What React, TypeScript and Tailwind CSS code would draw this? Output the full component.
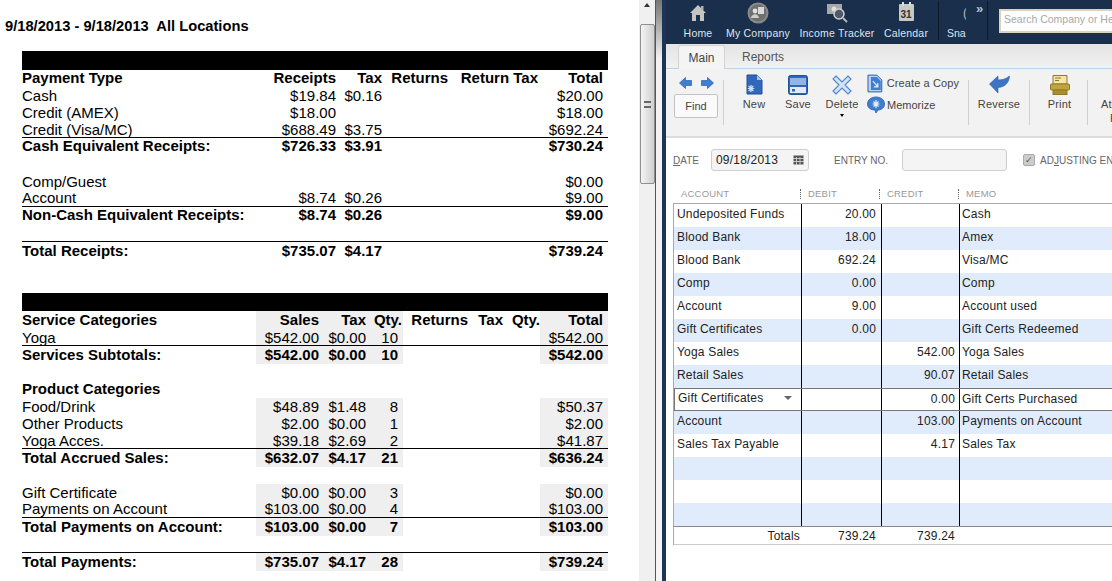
import React from "react"

type ReportRow = {
  h: string
  cells?: string[]
  bold?: boolean
  line?: boolean
  topLine?: boolean
  gray?: boolean
  head?: boolean
  lift?: boolean
}

const cols1 = [218, 96, 46, 66, 90, 70]
const cols2 = [234, 63, 47, 37, 65, 35, 37, 68]

function Row({ row, cols }: { row: ReportRow; cols: number[] }) {
  const grayIdx = row.gray ? [1, 2, 3, 7] : []
  const isSales = cols.length === 8
  return (
    <div
      className={`flex ${row.h} ${row.line ? "border-b border-black" : ""} ${row.topLine ? "border-t border-black" : ""} ${row.bold ? "font-bold" : ""}`}
    >
      {cols.map((w, i) => (
        <div
          key={i}
          style={{ width: w }}
          className={`flex items-center leading-none whitespace-nowrap ${row.bold || row.lift ? "pb-[2px]" : ""} ${i === 0 ? "" : "justify-end"} ${i === cols.length - 1 ? "pr-[5px]" : ""} ${grayIdx.includes(i) ? "bg-[#efefef]" : ""} ${isSales && i === 3 ? (row.head ? "pr-px" : "pr-[5px]") : ""}`}
        >
          {row.cells?.[i] ?? ""}
        </div>
      ))}
    </div>
  )
}

const receipts: ReportRow[] = [
  { h: "h-[17px]", bold: true, cells: ["Payment Type", "Receipts", "Tax", "Returns", "Return Tax", "Total"] },
  { h: "h-[17px]", cells: ["Cash", "$19.84", "$0.16", "", "", "$20.00"] },
  { h: "h-[17px]", cells: ["Credit (AMEX)", "$18.00", "", "", "", "$18.00"] },
  { h: "h-[17px]", line: true, cells: ["Credit (Visa/MC)", "$688.49", "$3.75", "", "", "$692.24"] },
  { h: "h-[17px]", bold: true, cells: ["Cash Equivalent Receipts:", "$726.33", "$3.91", "", "", "$730.24"] },
  { h: "h-[18px]" },
  { h: "h-[17px]", cells: ["Comp/Guest", "", "", "", "", "$0.00"] },
  { h: "h-[17px]", line: true, lift: true, cells: ["Account", "$8.74", "$0.26", "", "", "$9.00"] },
  { h: "h-[17px]", bold: true, cells: ["Non-Cash Equivalent Receipts:", "$8.74", "$0.26", "", "", "$9.00"] },
  { h: "h-[17px]" },
  { h: "h-[19px]", bold: true, topLine: true, cells: ["Total Receipts:", "$735.07", "$4.17", "", "", "$739.24"] },
]

const sales: ReportRow[] = [
  { h: "h-[18px]", bold: true, gray: true, head: true, cells: ["Service Categories", "Sales", "Tax", "Qty.", "Returns", "Tax", "Qty.", "Total"] },
  { h: "h-[17px]", gray: true, line: true, cells: ["Yoga", "$542.00", "$0.00", "10", "", "", "", "$542.00"] },
  { h: "h-[18px]", gray: true, bold: true, cells: ["Services Subtotals:", "$542.00", "$0.00", "10", "", "", "", "$542.00"] },
  { h: "h-[17px]" },
  { h: "h-[17px]", bold: true, cells: ["Product Categories"] },
  { h: "h-[17px]", gray: true, cells: ["Food/Drink", "$48.89", "$1.48", "8", "", "", "", "$50.37"] },
  { h: "h-[17px]", gray: true, cells: ["Other Products", "$2.00", "$0.00", "1", "", "", "", "$2.00"] },
  { h: "h-[17px]", gray: true, line: true, cells: ["Yoga Acces.", "$39.18", "$2.69", "2", "", "", "", "$41.87"] },
  { h: "h-[18px]", gray: true, bold: true, cells: ["Total Accrued Sales:", "$632.07", "$4.17", "21", "", "", "", "$636.24"] },
  { h: "h-[17px]" },
  { h: "h-[17px]", gray: true, cells: ["Gift Certificate", "$0.00", "$0.00", "3", "", "", "", "$0.00"] },
  { h: "h-[17px]", gray: true, line: true, lift: true, cells: ["Payments on Account", "$103.00", "$0.00", "4", "", "", "", "$103.00"] },
  { h: "h-[18px]", gray: true, bold: true, cells: ["Total Payments on Account:", "$103.00", "$0.00", "7", "", "", "", "$103.00"] },
  { h: "h-[16px]" },
  { h: "h-[19px]", gray: true, bold: true, topLine: true, cells: ["Total Payments:", "$735.07", "$4.17", "28", "", "", "", "$739.24"] },
]

function HomeIcon() {
  return (
    <svg width="18" height="18" viewBox="0 0 18 18">
      <path d="M9 1 L17 9 L15 9 L15 17 L11 17 L11 11 L7 11 L7 17 L3 17 L3 9 L1 9 Z" fill="#c4c4c0" />
      <rect x="12" y="2" width="2.5" height="4" fill="#b0b0ac" />
    </svg>
  )
}

function CompanyIcon() {
  return (
    <svg width="22" height="22" viewBox="0 0 22 22">
      <circle cx="11" cy="11" r="10.5" fill="#8a8a8a" />
      <circle cx="11" cy="11" r="8.5" fill="#6f6f6f" />
      <rect x="11" y="5" width="6" height="7" fill="#d8d8d8" />
      <circle cx="8" cy="9" r="2.4" fill="#e0e0e0" />
      <path d="M4 16 C5 11 11 11 12 16 Z" fill="#cfcfcf" />
    </svg>
  )
}

function TrackerIcon() {
  return (
    <svg width="22" height="22" viewBox="0 0 22 22">
      <rect x="1" y="2" width="15" height="10" fill="#a8a8a8" />
      <circle cx="8" cy="7" r="2.5" fill="#e0e0e0" />
      <circle cx="13" cy="12" r="5" fill="#4e5a68" stroke="#d0d0d0" strokeWidth="1.5" />
      <path d="M17 16 L21 20" stroke="#b8b8b8" strokeWidth="2" />
    </svg>
  )
}

function CalendarIcon() {
  return (
    <div className="relative h-[17px] w-[15px] rounded-[1px] bg-[#c9c9c4]">
      <div className="absolute left-[3px] top-[-2px] h-[4px] w-[2px] bg-[#ddd]" />
      <div className="absolute right-[3px] top-[-2px] h-[4px] w-[2px] bg-[#ddd]" />
      <div className="absolute inset-x-0 bottom-[1px] text-center text-[10px] font-bold leading-none text-[#333]">31</div>
    </div>
  )
}

function NavItem({ w, label, children }: { w: string; label: string; children: React.ReactNode }) {
  return (
    <div className={`flex ${w} shrink-0 flex-col items-center`}>
      <div className="flex h-[25px] items-center">{children}</div>
      <div className="mt-[1px] whitespace-nowrap text-[10.5px] leading-[14px] tracking-[0.2px] text-[#dfe5ec]">{label}</div>
    </div>
  )
}

function Arrow({ flip }: { flip?: boolean }) {
  return (
    <svg width="13" height="12" viewBox="0 0 13 12" className={flip ? "-scale-x-100" : ""}>
      <path d="M0.5 6 L6.5 0.5 L6.5 3.5 L12.5 3.5 L12.5 8.5 L6.5 8.5 L6.5 11.5 Z" fill="#3f7ed0" stroke="#2a5da8" strokeWidth="0.7" />
    </svg>
  )
}

function NewIcon() {
  return (
    <svg width="17" height="21" viewBox="0 0 17 21">
      <path d="M1 1 L11 1 L16 6 L16 20 L1 20 Z" fill="#3168bd" stroke="#24508f" />
      <path d="M11 1 L11 6 L16 6 Z" fill="#a8c6ee" />
      <path d="M5 11 L5 18 M1.8 14.5 L8.2 14.5 M2.6 12 L7.4 17 M7.4 12 L2.6 17" stroke="#cfe0f6" strokeWidth="1.2" />
    </svg>
  )
}

function SaveIcon() {
  return (
    <svg width="20" height="20" viewBox="0 0 20 20">
      <rect x="0.5" y="0.5" width="19" height="19" rx="2" fill="#2f66b8" stroke="#24508f" />
      <rect x="2" y="3" width="16" height="7" fill="#93b5e3" />
      <rect x="2" y="12" width="16" height="6" fill="#dfe9f7" />
      <rect x="4" y="14" width="3" height="2.5" fill="#2f66b8" />
    </svg>
  )
}

function DeleteIcon() {
  return (
    <svg width="20" height="20" viewBox="0 0 20 20">
      <path d="M4 1 L10 7 L16 1 L19 4 L13 10 L19 16 L16 19 L10 13 L4 19 L1 16 L7 10 L1 4 Z" fill="#d4e3f7" stroke="#4a85d0" strokeWidth="1.1" />
    </svg>
  )
}

function CopyIcon() {
  return (
    <svg width="16" height="19" viewBox="0 0 16 19">
      <path d="M1 1 L10 1 L15 6 L15 18 L1 18 Z" fill="#bcd3f0" stroke="#2a5da8" />
      <path d="M4 3 L10 3 L14 7 L14 16 L4 16 Z" fill="#3f7ed0" />
      <path d="M6 7 L11 13 M11 9 L11 13 L7 13" stroke="#e6effa" strokeWidth="1.2" fill="none" />
    </svg>
  )
}

function MemorizeIcon() {
  return (
    <svg width="18" height="18" viewBox="0 0 18 18">
      <path d="M9 1 C14 1 17.5 4 17.5 8 C17.5 12 14 14 11 14 L9 17 L8 14 C4 14 0.5 12 0.5 8 C0.5 4 4 1 9 1 Z" fill="#3f7ed0" stroke="#2a5da8" strokeWidth="0.8" />
      <path d="M9 4 L9 12 M5.5 8 L12.5 8 M6.5 5.5 L11.5 10.5 M11.5 5.5 L6.5 10.5" stroke="#e6effa" strokeWidth="1.2" />
    </svg>
  )
}

function ReverseIcon() {
  return (
    <svg width="21" height="19" viewBox="0 0 21 19">
      <path d="M0.5 9 L9 1 L9 5 C13 5 17 4 20.5 1 C20 8 16 12 9 12.5 L9 18 Z" fill="#3d74c4" stroke="#2a5da8" strokeWidth="0.6" />
    </svg>
  )
}

function PrintIcon() {
  return (
    <svg width="20" height="20" viewBox="0 0 20 20">
      <path d="M3 0.5 L17 0.5 L17 9 L3 9 Z" fill="#f3e4a8" stroke="#8f7a2c" />
      <path d="M5 3 L11 3 M5 5.5 L9 5.5" stroke="#8f7a2c" />
      <rect x="0.5" y="9" width="19" height="6" rx="1" fill="#c2a43c" stroke="#8f7a2c" />
      <rect x="3" y="15" width="14" height="4.5" fill="#a98d2e" stroke="#8f7a2c" />
    </svg>
  )
}

function ToolBtn({ w, label, children, caret }: { w: string; label: string; children: React.ReactNode; caret?: boolean }) {
  return (
    <div className={`flex ${w} shrink-0 flex-col items-center`}>
      <div className="flex h-[23px] items-center">{children}</div>
      <div className="mt-[1px] text-[11px] leading-[14px] tracking-[0.2px] text-[#444]">{label}</div>
      {caret && <div className="mt-[3px] h-0 w-0 border-x-[2.5px] border-t-[3px] border-x-transparent border-t-black" />}
    </div>
  )
}

function Sep() {
  return <div className="h-[45px] w-px shrink-0 bg-[#cfcfcf]" />
}

type Line = { account: string; debit: string; credit: string; memo: string }

const lines: Line[] = [
  { account: "Undeposited Funds", debit: "20.00", credit: "", memo: "Cash" },
  { account: "Blood Bank", debit: "18.00", credit: "", memo: "Amex" },
  { account: "Blood Bank", debit: "692.24", credit: "", memo: "Visa/MC" },
  { account: "Comp", debit: "0.00", credit: "", memo: "Comp" },
  { account: "Account", debit: "9.00", credit: "", memo: "Account used" },
  { account: "Gift Certificates", debit: "0.00", credit: "", memo: "Gift Certs Redeemed" },
  { account: "Yoga Sales", debit: "", credit: "542.00", memo: "Yoga Sales" },
  { account: "Retail Sales", debit: "", credit: "90.07", memo: "Retail Sales" },
  { account: "Gift Certificates", debit: "", credit: "0.00", memo: "Gift Certs Purchased" },
  { account: "Account", debit: "", credit: "103.00", memo: "Payments on Account" },
  { account: "Sales Tax Payable", debit: "", credit: "4.17", memo: "Sales Tax" },
  { account: "", debit: "", credit: "", memo: "" },
  { account: "", debit: "", credit: "", memo: "" },
  { account: "", debit: "", credit: "", memo: "" },
]

function HeaderCell({ w, label, dots }: { w: string; label: string; dots?: boolean }) {
  return (
    <div className={`flex ${w} shrink-0 items-center`}>
      {dots && <div className="ml-[-1px] mr-[7px] h-[10px] w-px border-l border-dotted border-[#666]" />}
      <span className={dots ? "" : "pl-[8px]"}>{label}</span>
    </div>
  )
}

export default function App() {
  return (
    <div className="flex h-[581px] w-[1112px] overflow-hidden bg-white text-black">
      {/* Report */}
      <div className="w-[639px] shrink-0 overflow-hidden pl-[22px] font-['Liberation_Sans',sans-serif] text-[15px]">
        <div className="ml-[-17px] h-[51px] pt-[18px] text-[14.7px] font-bold leading-4 whitespace-pre">9/18/2013 - 9/18/2013  All Locations</div>
        <div className="w-[586px]">
          <div className="h-[19px] bg-black" />
          {receipts.map((r, i) => (
            <Row key={i} row={r} cols={cols1} />
          ))}
          <div className="h-[33px]" />
          <div className="h-[18px] bg-black" />
          {sales.map((r, i) => (
            <Row key={i} row={r} cols={cols2} />
          ))}
        </div>
      </div>

      {/* Scrollbar */}
      <div className="flex w-[17px] shrink-0 flex-col items-center border-r border-[#555] bg-[#f0f0f0]">
        <div className="mt-[3px] h-0 w-0 border-x-[3px] border-b-[4px] border-x-transparent border-b-[#333]" />
        <div className="mt-[17px] flex h-[160px] w-[15px] items-center justify-center rounded-[2px] border border-[#8e8e8e] bg-gradient-to-r from-[#f4f4f4] to-[#cfcfcf]">
          <div className="h-[7px] w-[7px] border-y-2 border-double border-[#666]" />
        </div>
      </div>

      {/* Splitter */}
      <div className="w-[6px] shrink-0 bg-gradient-to-b from-[#777] via-[#f2f2f2] via-[10%] to-[#f5f5f5]" />
      <div className="w-[4px] shrink-0 bg-[#1b3556]" />

      {/* QuickBooks window */}
      <div className="flex min-w-0 flex-1 flex-col overflow-hidden font-['Liberation_Sans',sans-serif] text-[12px]">
        <div className="flex h-[44px] shrink-0 bg-[#1a2f4c]">
          <NavItem w="w-[64px]" label="Home"><HomeIcon /></NavItem>
          <NavItem w="w-[56px]" label="My Company"><CompanyIcon /></NavItem>
          <NavItem w="w-[102px]" label="Income Tracker"><TrackerIcon /></NavItem>
          <NavItem w="w-[36px]" label="Calendar"><CalendarIcon /></NavItem>
          <div className="ml-[14px] mt-[1px] h-[39px] w-px shrink-0 bg-[#0d1a2c]" />
          <div className="ml-[8px] w-[19px] shrink-0 overflow-hidden">
            <div className="h-[26px] pl-[16px] pt-[5px] text-[12px] leading-4 text-[#bbb]">(</div>
            <div className="text-[10.5px] leading-[14px] text-[#dfe5ec]">Snapshots</div>
          </div>
          <div className="ml-[10px] mt-[1px] w-[11px] shrink-0 text-[13px] font-bold leading-4 text-[#b8c4d2]">»</div>
          <div className="mt-[1px] h-[39px] w-px shrink-0 bg-[#0d1a2c]" />
          <div className="ml-[11px] mt-[9px] h-[24px] w-[130px] shrink-0 border-2 border-[#d9d2bd] bg-white pl-[3px] text-[10.5px] leading-[16px] whitespace-nowrap text-[#a8a8a8]">
            Search Company or Help
          </div>
        </div>

        <div className="flex h-[25px] shrink-0 border-b border-[#bcd0e6] bg-gradient-to-b from-[#e4e4e4] to-[#f1f1f1] pl-[12px]">
          <div className="mt-[1px] flex h-[24px] w-[47px] items-center justify-center rounded-t-[3px] border-x border-t border-[#d4d4d4] bg-[#f4f4f4] text-[12px] text-[#444]">Main</div>
          <div className="ml-[17px] flex items-center pt-[2px] text-[12px] text-[#555]">Reports</div>
        </div>

        <div className="flex h-[69px] shrink-0 items-start border-b-2 border-[#dcdcdc] bg-[#f2f2f2] pl-[8px]">
          <div className="flex w-[44px] shrink-0 flex-col">
            <div className="mt-[8px] flex h-[12px] gap-[9px] pl-[5px]">
              <Arrow />
              <Arrow flip />
            </div>
            <div className="mt-[5px] flex h-[24px] items-center justify-center rounded-[2px] border border-[#c4c4c4] bg-[#fafafa] text-[11px] text-[#444]">Find</div>
          </div>
          <div className="ml-[5px] mt-[11px]"><Sep /></div>
          <div className="mt-[4px] ml-[9px] flex">
            <ToolBtn w="w-[42px]" label="New"><NewIcon /></ToolBtn>
            <ToolBtn w="w-[46px]" label="Save"><SaveIcon /></ToolBtn>
            <ToolBtn w="w-[42px]" label="Delete" caret><DeleteIcon /></ToolBtn>
          </div>
          <div className="ml-[4px] mt-[5px] flex w-[92px] shrink-0 flex-col gap-[3px] text-[11px] text-[#444]">
            <div className="flex h-[19px] items-center gap-[4px]"><CopyIcon /><span className="whitespace-nowrap tracking-[0.1px]">Create a Copy</span></div>
            <div className="flex h-[18px] items-center gap-[2px]"><MemorizeIcon /><span>Memorize</span></div>
          </div>
          <div className="ml-[9px] mt-[11px]"><Sep /></div>
          <div className="mt-[4px]"><ToolBtn w="w-[60px]" label="Reverse"><ReverseIcon /></ToolBtn></div>
          <div className="mt-[11px]"><Sep /></div>
          <div className="ml-[2px] mt-[4px]"><ToolBtn w="w-[55px]" label="Print"><PrintIcon /></ToolBtn></div>
          <div className="mt-[11px]"><Sep /></div>
          <div className="ml-[13px] mt-[28px] text-[11px] leading-[14px] tracking-[0.2px] text-[#444]">
            <div>Attach</div>
            <div className="pl-[9px]">File</div>
          </div>
        </div>

        <div className="flex h-[65px] shrink-0 flex-col pl-[7px]">
          <div className="mt-[11px] flex h-[22px] items-center whitespace-nowrap text-[10px] text-[#666]">
            <span className="w-[38px] shrink-0"><u>D</u>ATE</span>
            <div className="flex h-[22px] w-[98px] shrink-0 items-center justify-between rounded-[3px] border border-[#cfcfcf] bg-[#f4f4f4] px-[4px] text-[12px] tracking-[0.2px] text-[#222]">
              09/18/2013
              <svg width="11" height="10" viewBox="0 0 11 10"><rect x="0.5" y="0.5" width="10" height="9" fill="#555" /><path d="M0 3.5H11M0 6.5H11M3.5 2V10M7 2V10" stroke="#ddd" strokeWidth="0.8" /></svg>
            </div>
            <span className="ml-[25px] w-[68px] shrink-0">ENTRY NO.</span>
            <div className="h-[22px] w-[105px] shrink-0 rounded-[3px] border border-[#cfcfcf] bg-[#f4f4f4]" />
            <div className="ml-[16px] flex h-[12px] w-[12px] shrink-0 items-center justify-center rounded-[2px] border border-[#aaa] bg-[#ccc] text-[9px] leading-none text-[#555]">✓</div>
            <span className="ml-[5px] shrink-0 whitespace-nowrap"><span>AD</span><u>J</u><span>USTING ENTRY</span></span>
          </div>
          <div className="mt-[17px] flex h-[14px] items-start text-[9.5px] leading-[12px] tracking-[0.2px] text-[#999]">
            <HeaderCell w="w-[128px]" label="ACCOUNT" />
            <HeaderCell w="w-[79px]" label="DEBIT" dots />
            <HeaderCell w="w-[79px]" label="CREDIT" dots />
            <HeaderCell w="w-[100px]" label="MEMO" dots />
          </div>
        </div>

        <div className="ml-[7px] flex w-[460px] shrink-0 flex-col border-l border-t border-[#aaa] text-[12px] tracking-[0.2px] text-[#222]">
          {lines.map((l, i) => {
            const selected = i === 8
            const rowBg = selected ? "bg-white" : i % 2 === 1 ? "bg-[#e0ecfc]" : "bg-white"
            return (
              <div key={i} className={`flex h-[23px] ${rowBg} ${selected ? "border-y border-[#777]" : ""}`}>
                <div className={`flex w-[128px] shrink-0 items-center justify-between border-r border-black pb-[4px] pl-[3px] pr-[9px] ${selected ? "border-l border-l-[#777] pb-[2px] pl-[2px]" : ""}`}>
                  <span>{l.account}</span>
                  {selected && <span className="h-0 w-0 border-x-[4px] border-t-[4px] border-x-transparent border-t-[#666]" />}
                </div>
                <div className={`flex w-[80px] shrink-0 items-center justify-end border-r border-black pr-[5px] ${selected ? "pb-[2px]" : "pb-[4px]"}`}>{l.debit}</div>
                <div className={`flex w-[78px] shrink-0 items-center justify-end border-r border-black pr-[4px] ${selected ? "pb-[2px]" : "pb-[4px]"}`}>{l.credit}</div>
                <div className={`flex flex-1 items-center pl-[2px] ${selected ? "pb-[2px]" : "pb-[4px]"}`}>{l.memo}</div>
              </div>
            )
          })}
          <div className="flex h-[19px] border-y border-b-[#ccc] border-t-[#888] bg-white">
            <div className="flex w-[128px] shrink-0 items-center justify-end pr-[2px]">Totals</div>
            <div className="flex w-[80px] shrink-0 items-center justify-end pr-[6px]">739.24</div>
            <div className="flex w-[78px] shrink-0 items-center justify-end pr-[5px]">739.24</div>
          </div>
        </div>
      </div>
    </div>
  )
}
